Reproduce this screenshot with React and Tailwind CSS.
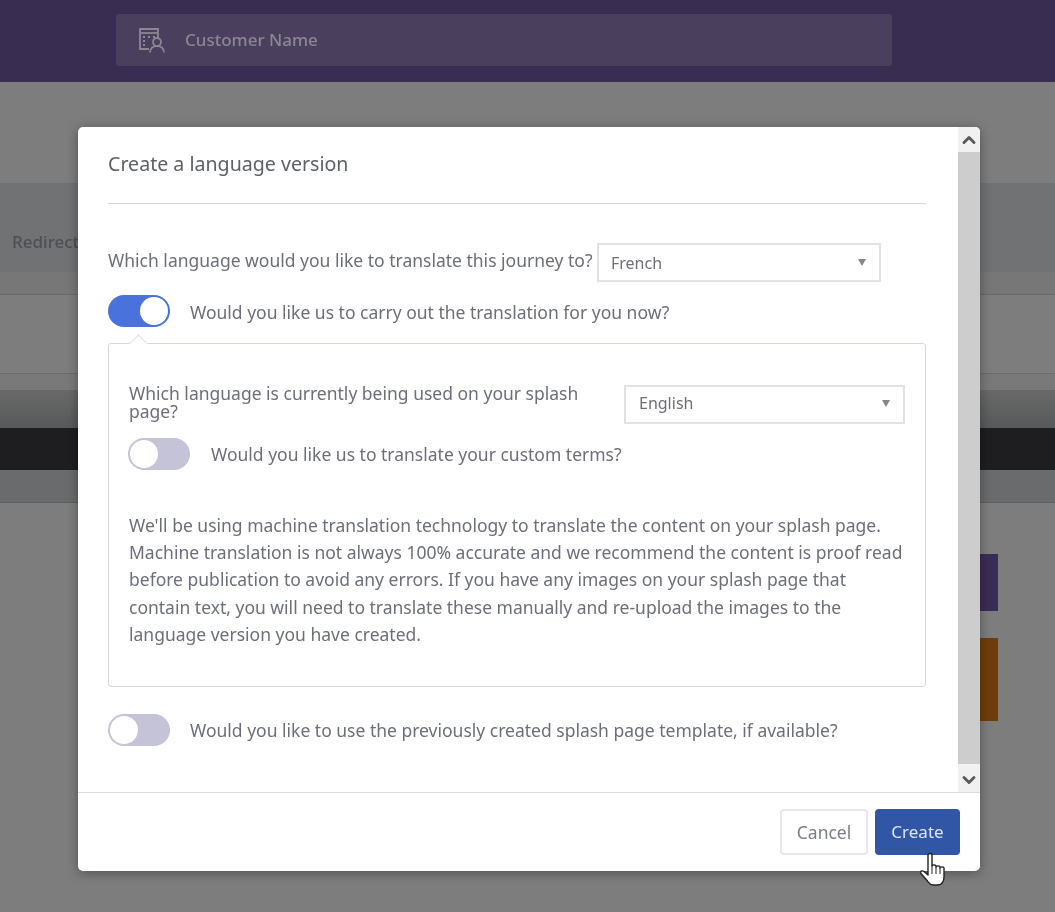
import { ChevronUp, ChevronDown } from 'lucide-react';

// Customer search icon: a small document with a person on top of its corner
const CustomerIcon = () => (
  <svg width="28" height="26" viewBox="0 0 28 26" fill="none" stroke="#8a8794" strokeWidth="1.8">
    <path d="M11 22H2V2h18v9" />
    <path d="M2 6h18" />
    <path d="M5 10h2M5 14h2M5 18h2M10 10h2M15 10h2" />
    <circle cx="19" cy="15" r="4" />
    <path d="M12 25.500c0-4 3-6.500 7-6.500s7 2.500 7 6.500" />
  </svg>
);

const HandCursor = () => (
  <svg width="26" height="34" viewBox="0 0 26 34" fill="white" stroke="#222222" strokeWidth="1.4" strokeLinejoin="round">
    <path d="M8 3c0-2 4-2 4 0v11c0-1.500 4-1.500 4 0v1c0-1.500 4-1.500 4 0v1c0-1.500 4-1.500 4 0v9c0 4-2 8-6 8h-5c-3 0-4-2-6-4.500l-6-7c-1.500-2 1-3.500 3-2l4 3.500z" />
    <path d="M12 14v8M16 15v7M20 16v6" fill="none" strokeWidth="1" />
  </svg>
);

const Toggle = ({ on }) => (
  <div
    className={`w-[62px] h-[32px] shrink-0 rounded-full flex items-center p-[2px] ${
      on ? 'bg-[#4a72dc] justify-end' : 'bg-[#c4c3d8] justify-start'
    }`}
  >
    <div className="w-[28px] h-[28px] rounded-full bg-white" />
  </div>
);

const Select = ({ value, className }) => (
  <div className={`h-[39px] border-2 border-[#e2e2e2] bg-white flex items-center justify-between pr-[13px] ${className}`}>
    <span className="text-[16px] text-[#6e6f78]">{value}</span>
    <span className="w-0 h-0 border-x-[4px] border-x-transparent border-t-[7px] border-t-[#85868c]" />
  </div>
);

// Dimmed page behind the modal
const Background = () => (
  <div className="flex flex-col h-full bg-[#7d7d7d]">
    <div className="h-[82px] bg-[#3a2d52] pt-[14px] pl-[116px]">
      <div className="w-[776px] h-[52px] rounded-[3px] bg-[#4a3f5c] flex items-center pl-[22px] gap-[19px]">
        <CustomerIcon />
        <span className="text-[17px] font-medium text-[#8a8794]">Customer Name</span>
      </div>
    </div>
    <div className="h-[101px]" />
    <div className="h-[89px] bg-[#717273] flex items-center pl-[12px] pt-[28px]">
      <span className="text-[17px] font-medium text-[#4e4f56]">Redirect</span>
    </div>
    <div className="h-[23px] bg-[#777777] border-b border-[#69686f]" />
    <div className="h-[79px] border-b border-[#6c6c6c]" />
    <div className="h-[16px] bg-[#797979]" />
    <div className="h-[38px] bg-gradient-to-b from-[#696969] to-[#58595a]" />
    <div className="h-[42px] bg-[#1e1e20]" />
    <div className="h-[33px] bg-[#6a6b6c] border-b border-[#5e5e5e]" />
    <div className="flex-1 flex flex-col items-end pr-[57px] pt-[51px]">
      <div className="w-[60px] h-[57px] bg-[#3a2d55]" />
      <div className="w-[60px] h-[83px] mt-[27px] bg-[#6f3d0a]" />
    </div>
  </div>
);

export default function App() {
  return (
    <div className="relative w-full h-[912px] overflow-hidden blur-[0.4px] font-['Noto_Sans',sans-serif] text-[#6d6e7c]">
      <Background />

      <div className="absolute left-[78px] top-[127px] w-[902px] h-[744px] bg-white rounded-[5px] shadow-[0_2px_12px_rgba(0,0,0,0.35)] flex flex-col overflow-hidden">
        <div className="flex h-[666px] border-b border-[#dcdbe9]">
          <div className="flex-1 pl-[30px] pr-[32px]">
            <div className="pt-[24px] pb-[26px] border-b border-[#d6d6e2]">
              <h2 className="text-[19.6px] leading-[26px] text-[#5d6069]">Create a language version</h2>
            </div>

            <div className="mt-[39px] flex items-center h-[39px]">
              <span className="text-[17.5px] w-[489px] shrink-0 pb-[5px]">Which language would you like to translate this journey to?</span>
              <Select value="French" className="w-[284px] pl-[12px]" />
            </div>

            <div className="mt-[13px] flex items-center gap-[20px]">
              <Toggle on />
              <span className="text-[17.5px] pt-[2px]">Would you like us to carry out the translation for you now?</span>
            </div>

            <div className="relative mt-[16px] h-[344px] border border-[#d7d6e6] rounded-[3px] px-[20px] pt-[41px]">
              {/* Callout notch pointing at the toggle above */}
              <div className="absolute left-[23px] top-[-7px] w-[13px] h-[13px] rotate-45 bg-white border-l border-t border-[#e2e1ec]" />
              <div className="flex items-center h-[39px]">
                <div className="w-[495px] shrink-0 pr-[25px] pb-[6px] text-[17.5px] leading-[18px]">
                  Which language is currently being used on your splash page?
                </div>
                <Select value="English" className="w-[281px] pl-[13px] pb-[3px]" />
              </div>
              <div className="mt-[14px] -ml-px flex items-center gap-[21px]">
                <Toggle />
                <span className="text-[17.5px] pt-[1px]">Would you like us to translate your custom terms?</span>
              </div>
              <p className="mt-[42px] text-[17.5px] leading-[27.2px]">
                We'll be using machine translation technology to translate the content on your splash page.
                Machine translation is not always 100% accurate and we recommend the content is proof read
                before publication to avoid any errors. If you have any images on your splash page that
                contain text, you will need to translate these manually and re-upload the images to the
                language version you have created.
              </p>
            </div>

            <div className="mt-[27px] flex items-center gap-[20px]">
              <Toggle />
              <span className="text-[17.5px] pt-[1px]">Would you like to use the previously created splash page template, if available?</span>
            </div>
          </div>

          {/* Scrollbar */}
          <div className="w-[24px] flex flex-col bg-[#cdcdcd]">
            <div className="h-[25px] bg-[#f1f1f1] flex items-center justify-center">
              <ChevronUp size={20} strokeWidth={3.5} color="#5a5a5a" />
            </div>
            <div className="flex-1" />
            <div className="h-[28px] pt-[4px] bg-[#f1f1f1] flex items-center justify-center">
              <ChevronDown size={20} strokeWidth={3.5} color="#5a5a5a" />
            </div>
          </div>
        </div>

        <div className="flex-1 flex justify-end items-start pt-[16px] pr-[20px] gap-[7px]">
          <button className="w-[88px] h-[46px] border-2 border-[#e6e5f0] rounded-[4px] bg-white text-[17.5px] text-[#7c7d8c]">
            Cancel
          </button>
          <button className="w-[85px] h-[46px] rounded-[4px] bg-[#3156a6] text-[17px] text-[#dbe4f5]">
            Create
          </button>
        </div>
      </div>

      {/* Mouse cursor over the Create button */}
      <div className="absolute left-[920px] top-[852px]">
        <HandCursor />
      </div>
    </div>
  );
}
